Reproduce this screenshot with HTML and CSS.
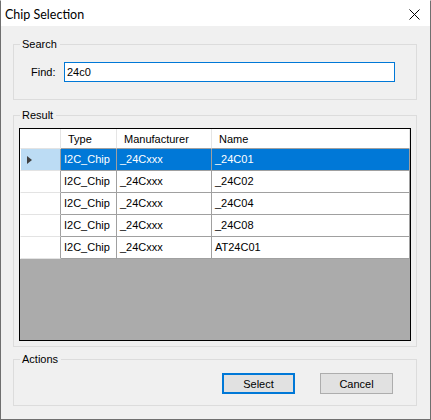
FILE: index.html
```html
<!DOCTYPE html>
<html>
<head>
<meta charset="utf-8">
<link rel="stylesheet" href="styles.css">
</head>
<body>
<div class="window">
  <div class="titlebar">
    <span class="title">Chip Selection</span>
    <svg class="close" width="11" height="11" viewBox="0 0 11 11"><path d="M0.5 0.5 L10.5 10.5 M10.5 0.5 L0.5 10.5" stroke="#000" stroke-width="1" fill="none"/></svg>
  </div>
  <div class="client">
    <fieldset class="group search">
      <legend>Search</legend>
      <div class="find-row">
        <span class="find-label">Find:</span>
        <div class="textbox">24c0</div>
      </div>
    </fieldset>
    <fieldset class="group result">
      <legend>Result</legend>
      <div class="grid">
        <div class="cells">
          <div class="c rh hd"></div>
          <div class="c hd">Type</div>
          <div class="c hd">Manufacturer</div>
          <div class="c hd last">Name</div>

          <div class="c rh sel-rh"><span class="arrow"></span></div>
          <div class="c sel">I2C_Chip</div>
          <div class="c sel">_24Cxxx</div>
          <div class="c sel last">_24C01</div>

          <div class="c rh"></div>
          <div class="c">I2C_Chip</div>
          <div class="c">_24Cxxx</div>
          <div class="c last">_24C02</div>

          <div class="c rh"></div>
          <div class="c">I2C_Chip</div>
          <div class="c">_24Cxxx</div>
          <div class="c last">_24C04</div>

          <div class="c rh"></div>
          <div class="c">I2C_Chip</div>
          <div class="c">_24Cxxx</div>
          <div class="c last">_24C08</div>

          <div class="c rh"></div>
          <div class="c">I2C_Chip</div>
          <div class="c">_24Cxxx</div>
          <div class="c last">AT24C01</div>
        </div>
      </div>
    </fieldset>
    <fieldset class="group actions">
      <legend>Actions</legend>
      <div class="buttons">
        <button class="btn primary">Select</button>
        <button class="btn">Cancel</button>
      </div>
    </fieldset>
  </div>
</div>
</body>
</html>
```
FILE: styles.css
```css
* { box-sizing: border-box; }
html, body { margin: 0; padding: 0; background: #3a3a3a; }
body { font-family: "Liberation Sans", Arial, sans-serif; font-size: 11px; color: #000; }

.window {
  width: 431px;
  height: 420px;
  border: 1px solid #6f6f6f;
  border-top-color: #ffffff;
  background: #f0f0f0;
  display: flex;
  flex-direction: column;
}

.titlebar {
  height: 25px;
  background: #ffffff;
  display: flex;
  align-items: center;
  justify-content: space-between;
  padding: 0 10px 0 4px;
}
.title {
  font-family: "Lato", "Liberation Sans", sans-serif;
  font-size: 12.5px;
  color: #000;
  margin-top: 1px;
}
.close { display: block; margin-top: 1px; }

.client {
  flex: 1;
  padding: 0 0 0 12px;
  display: flex;
  flex-direction: column;
}

.group {
  width: 404px;
  margin: 0;
  border: 1px solid #dcdcdc;
  padding: 0 5px;
  min-width: 0;
}
.group legend {
  font-size: 11px;
  line-height: 13px;
  padding: 0 3px 0 2px;
  margin-left: 1px;
  color: #000;
}

.search { margin-top: 12px; padding-top: 11px; padding-bottom: 17px; }
.find-row { display: flex; align-items: center; height: 20px; }
.find-label { width: 33px; margin-left: 12px; }
.textbox {
  width: 331px;
  height: 20px;
  border: 1px solid #0078d7;
  background: #fff;
  padding: 0 0 0 2px;
  line-height: 18px;
}

.result { margin-top: 9px; padding-top: 6px; padding-bottom: 5px; }
.grid {
  width: 392px;
  height: 213px;
  border: 1px solid #000;
  background: #ababab;
}
.cells {
  display: grid;
  grid-template-columns: 41px 56px 95px 198px;
  grid-template-rows: 20px repeat(5, 22px);
}
.c {
  background: #fff;
  border-right: 1px solid #a0a0a0;
  border-bottom: 1px solid #a0a0a0;
  padding: 0 0 0 3px;
  line-height: 21px;
  white-space: nowrap;
  overflow: hidden;
}
.c.hd {
  border-right-color: #e5e5e5;
  border-bottom-color: #a0a0a0;
  padding-left: 7px;
  line-height: 20px;
}
.c.hd.rh { border-right-color: #e5e5e5; }
.c.rh {
  border-right-color: #a0a0a0;
  border-bottom-color: #e3e3e3;
  border-left: 1px solid #fff;
}
.c.sel { background: #0078d7; color: #fff; }
.c.sel-rh { background: #bcdcf4; display: flex; align-items: center; padding-left: 6px; }
.arrow {
  width: 0;
  height: 0;
  border-top: 4px solid transparent;
  border-bottom: 4px solid transparent;
  border-left: 5px solid #404040;
}

.actions { margin-top: 6px; padding-top: 7px; padding-bottom: 11px; }
.buttons { display: flex; height: 21px; }
.btn {
  width: 73px;
  height: 21px;
  font-family: "Liberation Sans", Arial, sans-serif;
  font-size: 11px;
  color: #000;
  background: #e1e1e1;
  border: 1px solid #adadad;
  padding: 0;
  margin: 0;
}
.btn.primary { border: 2px solid #0078d7; margin-left: 203px; margin-right: 25px; }
```
